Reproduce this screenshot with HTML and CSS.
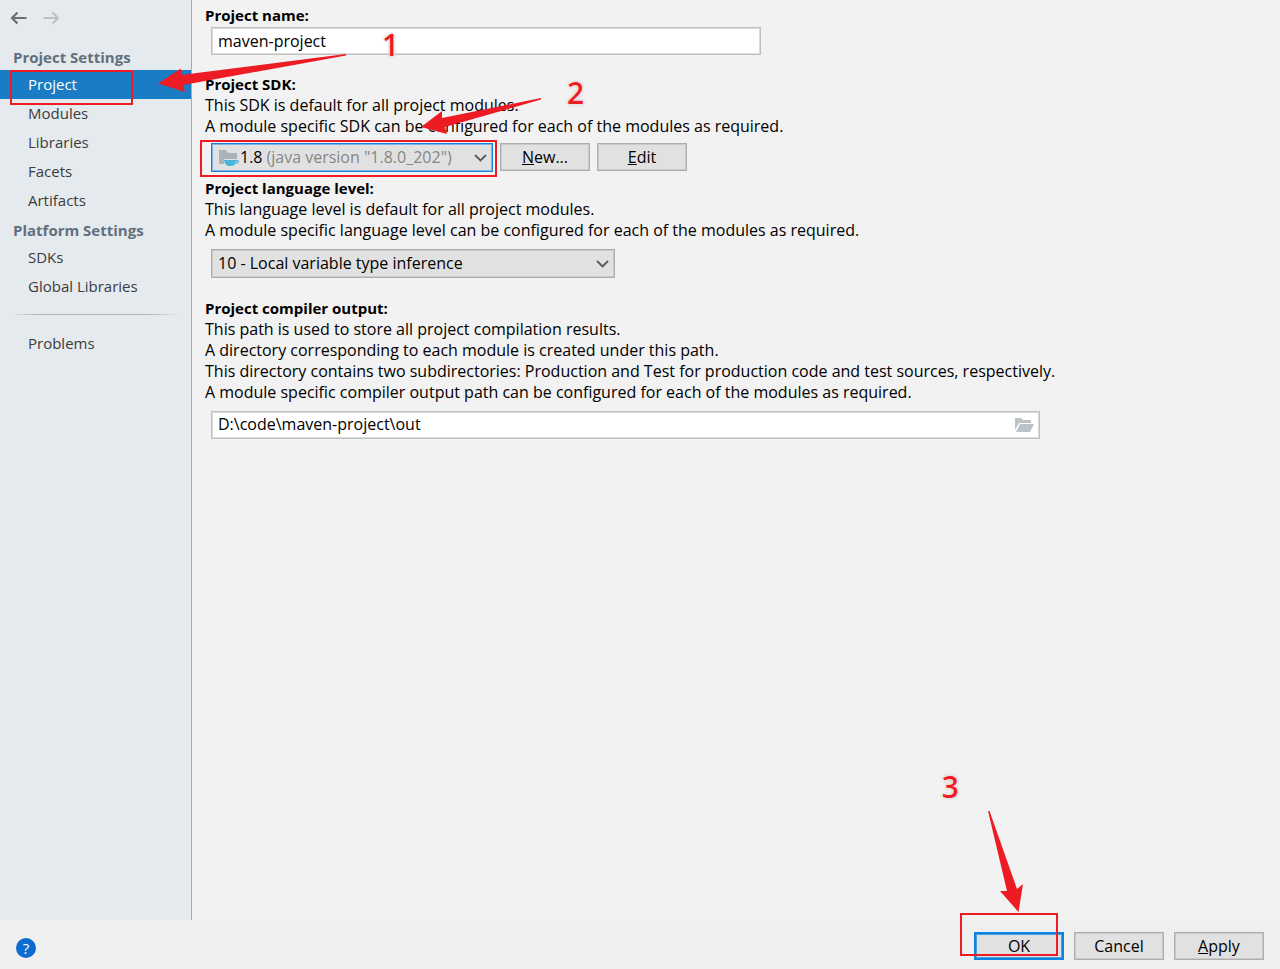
FILE: index.html
```
<!DOCTYPE html>
<html lang="en">
<head>
    <meta charset="UTF-8">
    <title>Project Structure</title>
    <link rel="stylesheet" href="styles.css">
</head>
<body>
    <div class="content">
        <aside class="sidebar">
            <div class="history">
                <button class="icon-btn" aria-label="Back">
                    <svg width="18" height="14" viewBox="0 0 18 14"><path d="M16.500 7H2M7.500 1.500L2 7l5.500 5.500" fill="none" stroke="#6e6e6e" stroke-width="2.200"/></svg>
                </button>
                <button class="icon-btn" aria-label="Forward" disabled>
                    <svg width="18" height="14" viewBox="0 0 18 14"><path d="M.5 7H15M9.500 1.500L15 7l-5.500 5.500" fill="none" stroke="#bfc1c3" stroke-width="2.200"/></svg>
                </button>
            </div>
            <nav>
                <h3>Project Settings</h3>
                <a href="#project" class="active">Project</a>
                <a href="#modules">Modules</a>
                <a href="#libraries">Libraries</a>
                <a href="#facets">Facets</a>
                <a href="#artifacts">Artifacts</a>
                <h3>Platform Settings</h3>
                <a href="#sdks">SDKs</a>
                <a href="#global">Global Libraries</a>
                <hr>
                <a href="#problems">Problems</a>
            </nav>
            <div class="mark mark-project"></div>
            <svg class="arrow arrow-project" width="190" height="42" viewBox="0 0 190 42"><path d="M0 33.500L23 18.500V25L188 4v1.500L25 35l2 7z"/></svg>
            <span class="step step-1">1</span>
        </aside>

        <main>
            <section class="name">
                <label class="title" for="projectName">Project name:</label>
                <input type="text" id="projectName" class="field" value="maven-project">
            </section>

            <section class="sdk">
                <label class="title" for="sdk">Project SDK:</label>
                <p>This SDK is default for all project modules.<br>
                A module specific SDK can be configured for each of the modules as required.</p>
                <div class="row">
                    <div class="combo focused">
                        <svg width="20" height="18" viewBox="0 0 20 18">
                            <path d="M0 1h7l2 3h9v6H5v5H0z" fill="#a9b4ba"/>
                            <path d="M5 11h14.500v3.500H16.500Q15 17 12.500 17H9.500Q5.500 16 5 11z" fill="#4cb4dd"/>
                            <path d="M17 12.200h1.300v1.200H17z" fill="#e1e1e1"/>
                        </svg>
                        <span>1.8</span>
                        <select id="sdk">
                            <option>(java version "1.8.0_202")</option>
                        </select>
                        <svg class="chevron" width="13" height="8" viewBox="0 0 13 8"><path d="M1 1l5.500 5.500L12 1"/></svg>
                    </div>
                    <button class="btn"><u>N</u>ew...</button>
                    <button class="btn"><u>E</u>dit</button>
                </div>
                <div class="mark mark-sdk"></div>
                <svg class="arrow arrow-sdk" width="122" height="40" viewBox="0 0 122 40"><path d="M0 29L21 13v7L120 0v1.500L24 29l2 7z"/></svg>
                <span class="step step-2">2</span>
            </section>

            <section class="level">
                <label class="title" for="level">Project language level:</label>
                <p>This language level is default for all project modules.<br>
                A module specific language level can be configured for each of the modules as required.</p>
                <div class="combo">
                    <select id="level">
                        <option>10 - Local variable type inference</option>
                    </select>
                    <svg class="chevron" width="13" height="8" viewBox="0 0 13 8"><path d="M1 1l5.500 5.500L12 1"/></svg>
                </div>
            </section>

            <section class="output">
                <label class="title" for="output">Project compiler output:</label>
                <p>This path is used to store all project compilation results.<br>
                A directory corresponding to each module is created under this path.<br>
                This directory contains two subdirectories: Production and Test for production code and test sources, respectively.<br>
                A module specific compiler output path can be configured for each of the modules as required.</p>
                <div class="field path">
                    <input type="text" id="output" value="D:\code\maven-project\out">
                    <button class="icon-btn" aria-label="Browse">
                        <svg width="19" height="14" viewBox="0 0 19 14"><path d="M0 0h6l2 2h8v3H4L0 12zM5 6h14l-4 8H1z" fill="#bcc3c7"/></svg>
                    </button>
                </div>
            </section>
        </main>
    </div>

    <footer>
        <button class="help" aria-label="Help">?</button>
        <div class="actions">
            <button class="btn default">OK</button>
            <button class="btn">Cancel</button>
            <button class="btn"><u>A</u>pply</button>
        </div>
        <div class="mark mark-ok"></div>
        <svg class="arrow arrow-ok" width="36" height="102" viewBox="0 0 36 102"><path d="M0 0h1.500L29 78l6-5-4.500 28L12 80h7z"/></svg>
        <span class="step step-3">3</span>
    </footer>
</body>
</html>
```

FILE: styles.css
```
* {
    box-sizing: border-box;
}
body {
    display: flex;
    flex-direction: column;
    min-height: 100vh;
    margin: 0;
    font-family: "Open Sans", "Noto Sans", sans-serif;
    font-size: 16px;
    line-height: 21px;
    color: #000;
    background: #efefef;
}
button, input, select {
    font: inherit;
    color: inherit;
}
.content {
    display: flex;
    flex: 1;
}

/* sidebar */
.sidebar {
    position: relative;
    flex: none;
    width: 192px;
    font-size: 15px;
    background: #e5eaee;
    border-right: 1px solid #a8acb0;
}
.history {
    display: flex;
    gap: 15px;
    height: 42px;
    padding: 11px 10px;
}
.icon-btn {
    display: flex;
    flex: none;
    height: 14px;
    padding: 0;
    border: none;
    background: none;
}
nav h3 {
    height: 28px;
    margin: 0;
    padding: 0 13px;
    font-size: 15px;
    line-height: 30px;
    color: #626f7d;
}
nav a {
    display: block;
    height: 29px;
    padding-left: 28px;
    line-height: 29px;
    color: #3c3c3c;
    text-decoration: none;
}
nav a.active {
    color: #fff;
    background: #1a7cc4;
}
nav hr {
    height: 1px;
    margin: 13px 10px 14px;
    border: none;
    background: linear-gradient(to right, transparent, #b0b4b8 15%, #b0b4b8 80%, transparent);
}

/* settings */
main {
    flex: 1;
    padding: 5px 13px;
    background: #f2f2f2;
}
section {
    position: relative;
}
.title {
    display: block;
    font-size: 15px;
    font-weight: bold;
}
p {
    margin: 0;
}
.field {
    display: block;
    width: 100%;
    height: 28px;
    margin-left: 6px;
    padding: 0 6px 1px;
    border: 1px solid #c0c0c0;
    box-shadow: inset 0 0 0 1px #dcdcdc;
    background: #fff;
}
.name .field {
    max-width: 550px;
    margin-top: 1px;
}
.sdk {
    margin-top: 19px;
}
.row {
    display: flex;
    gap: 7px;
    margin: 6px 0 0 6px;
}
.combo {
    display: flex;
    align-items: center;
    width: 404px;
    height: 29px;
    padding: 0 5px 0 6px;
    border: 1px solid #adadad;
    box-shadow: inset 0 0 0 1px #cacaca;
    background: #e1e1e1;
}
.combo select {
    flex: 1;
    min-width: 0;
    padding: 0;
    border: none;
    outline: none;
    background: none;
    appearance: none;
}
.combo.focused {
    width: 282px;
    padding-left: 7px;
    border-color: #1883d7;
    box-shadow: inset 0 0 0 1px #7db6e4;
}
.focused select {
    margin-left: 4px;
    color: #868686;
}
.focused span {
    margin-left: 1px;
}
.chevron {
    fill: none;
    stroke: #5a5a5a;
    stroke-width: 1.8;
}
.level {
    margin-top: 6px;
}
.level .combo {
    margin: 8px 0 0 6px;
}
.output {
    margin-top: 20px;
}
.path {
    display: flex;
    align-items: center;
    max-width: 829px;
    margin-top: 8px;
    padding-right: 5px;
}
.path input {
    flex: 1;
    padding: 0;
    border: none;
    background: none;
}
.btn {
    width: 90px;
    height: 28px;
    padding: 0;
    border: 1px solid #adadad;
    box-shadow: inset 0 0 0 1px #cacaca;
    background: #e1e1e1;
}
.btn.default {
    border: 2px solid #0a84e0;
    box-shadow: inset 0 0 0 1px #4a9fe0;
}

/* footer */
footer {
    position: relative;
    display: flex;
    align-items: center;
    justify-content: space-between;
    height: 49px;
    padding: 3px 16px 0;
}
.help {
    width: 20px;
    height: 20px;
    margin-top: 4px;
    padding: 0;
    border: none;
    border-radius: 50%;
    font-size: 15px;
    line-height: 20px;
    color: #fff;
    background: #0a6cce;
}
.actions {
    display: flex;
    gap: 10px;
}

/* numbered callouts */
.mark, .arrow, .step {
    position: absolute;
    z-index: 1;
    pointer-events: none;
}
.mark {
    border: 2px solid #ed1c24;
}
.arrow {
    fill: #ed1c24;
}
.step {
    font-size: 30px;
    line-height: 30px;
    font-weight: 600;
    color: #ed1c24;
    text-shadow: 0 0 1px #fff, 0 0 2px #fff, 0 0 2px #fff, 0 0 3px #888;
}
.mark-project {
    top: 70px;
    left: 10px;
    width: 123px;
    height: 35px;
}
.arrow-project {
    top: 50px;
    left: 158px;
}
.step-1 {
    top: 30px;
    left: 382px;
}
.mark-sdk {
    top: 66px;
    left: -5px;
    width: 297px;
    height: 37px;
}
.arrow-sdk {
    top: 24px;
    left: 216px;
}
.step-2 {
    top: 4px;
    left: 362px;
}
.mark-ok {
    right: 222px;
    bottom: 13px;
    width: 98px;
    height: 43px;
}
.arrow-ok {
    right: 256px;
    bottom: 56px;
}
.step-3 {
    right: 321px;
    bottom: 167px;
}
```
